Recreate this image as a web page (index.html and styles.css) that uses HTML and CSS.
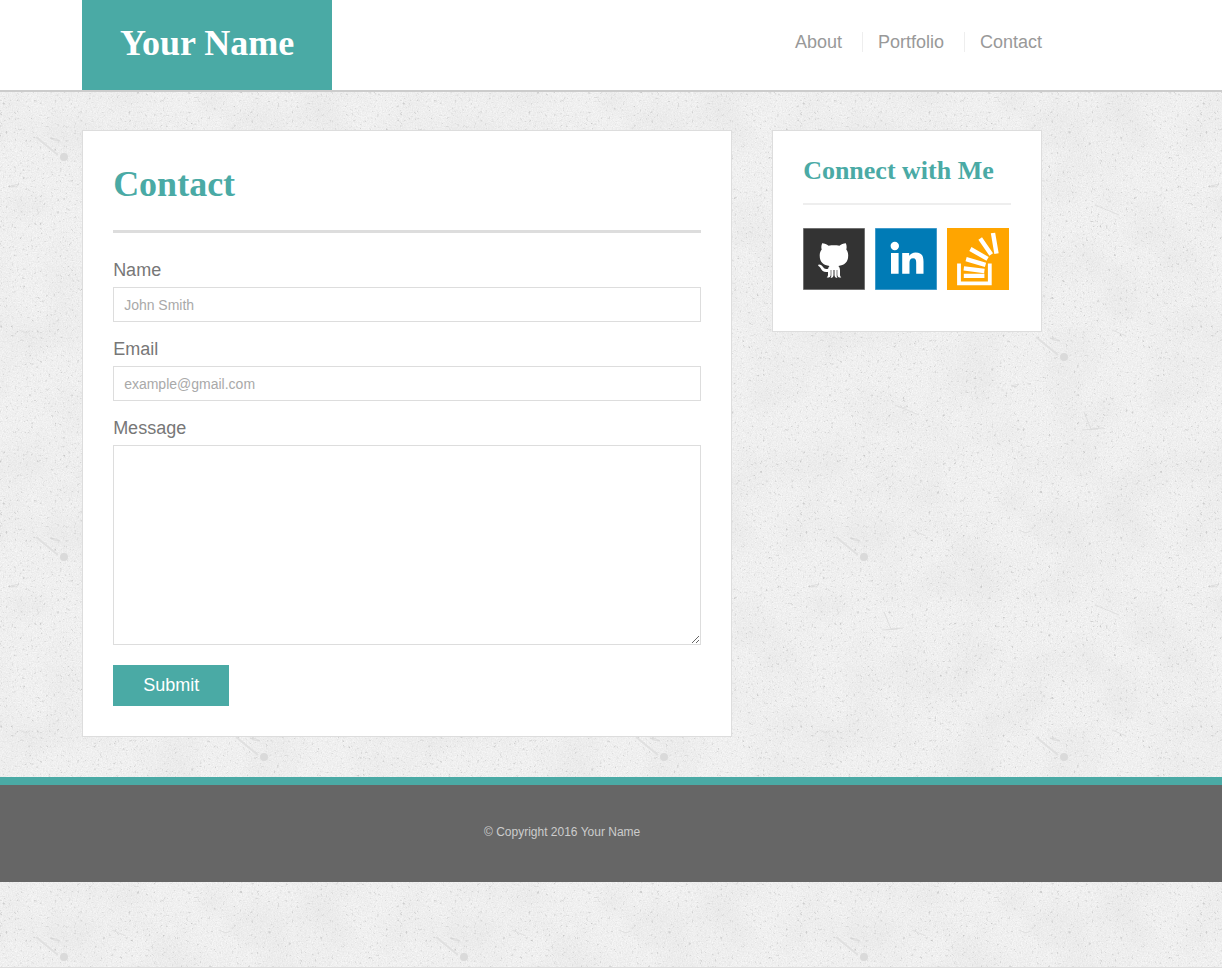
FILE: index.html
```html
<!DOCTYPE html>
<html lang="en">
<head>
  <meta charset="utf-8">
  <meta name="viewport" content="width=device-width, initial-scale=1">
  <title>Contact | Your Name</title>
  <link rel="stylesheet" href="styles.css">
</head>
<body>
  <header class="site-header">
    <div class="container header-row">
      <a class="logo" href="#">Your Name</a>
      <nav class="site-nav">
        <a href="#">About</a>
        <a href="#">Portfolio</a>
        <a href="#">Contact</a>
      </nav>
    </div>
  </header>

  <main class="site-main">
    <div class="container columns">
      <section class="card content">
        <h1 class="page-title">Contact</h1>
        <form class="contact-form">
          <div class="field">
            <label for="name">Name</label>
            <input id="name" type="text" placeholder="John Smith">
          </div>
          <div class="field">
            <label for="email">Email</label>
            <input id="email" type="email" placeholder="example@gmail.com">
          </div>
          <div class="field">
            <label for="message">Message</label>
            <textarea id="message"></textarea>
          </div>
          <button class="submit" type="submit">Submit</button>
        </form>
      </section>

      <aside class="card sidebar">
        <h2 class="side-title">Connect with Me</h2>
        <div class="social">
          <a href="#" aria-label="GitHub">
            <svg viewBox="0 0 62 62" width="62" height="62">
              <rect width="62" height="62" fill="#999"/>
              <rect x=".6" y=".6" width="60.8" height="60.8" fill="#333"/>
              <path fill="#fff" d="M19.200 15.200c2.400.2 4.500 1.200 6.400 2.500 3.600-.6 7.300-.6 10.800 0 1.900-1.300 4-2.300 6.400-2.500 1 2.100 1 4.300.5 6.300 1.300 1.600 1.900 3.600 1.900 6 0 6.900-4 9.800-9.800 10.400 1.100 1.200 1.600 2.400 1.600 4.200v4.700c0 1.300.4 1.900 1.300 2.600-2.200.4-4-.6-4-2.500v-4.800h-.6v5.300c0 1.200.3 1.900.8 2.700-1.800 0-3-1.100-3-3v-5h-1v5c0 1.900-1.200 3-3 3 .5-.8.8-1.500.8-2.700v-5.300h-.6v4.800c0 1.900-1.800 2.900-4 2.500.9-.7 1.300-1.300 1.300-2.600v-2.900c-4.200.6-6.100-.9-7.300-3.600-.5-1.100-1.200-1.800-2.200-2.300-.6-.4-.3-1.400.5-1.400 1.900 0 3.100 1.100 4 2.500 1.300 1.900 2.700 2.200 5.100 1.600.2-1.100.6-1.900 1.400-2.800-5.800-.6-9.800-3.500-9.800-10.400 0-2.400.7-4.400 2-6-.6-2-.5-4.200.5-6.300z"/>
            </svg>
          </a>
          <a href="#" aria-label="LinkedIn">
            <svg viewBox="0 0 62 62" width="62" height="62">
              <rect width="62" height="62" fill="#6bb0d8"/>
              <rect x=".6" y=".6" width="60.8" height="60.8" fill="#007bb6"/>
              <circle cx="19.800" cy="18" r="4.200" fill="#fff"/>
              <path fill="#fff" d="M16 25h7.600v20.700H16zM27.200 25h7v2.900c1.300-2.200 3.600-3.500 6.400-3.500 6 0 7.900 3.400 7.900 9.300v12h-7.300V34.800c0-2.800-.6-4.500-3.100-4.500-2.600 0-3.600 1.900-3.600 4.700v10.700h-7.300z"/>
            </svg>
          </a>
          <a href="#" aria-label="Stack Overflow">
            <svg viewBox="0 0 62 62" width="62" height="62">
              <rect width="62" height="62" fill="#ffa500"/>
              <g fill="none" stroke="#fff">
                <path stroke-width="3.800" d="M12 35.500v19.900h30.800V35.500"/>
                <path stroke-width="4.400" d="M16.800 47.900h20.600M16.800 40.400l20.600 2.600M19.100 31.200l19.400 5.600M23.400 21l17.200 9.900M33.200 10.600l11 15.900M46 5l3.500 20.600"/>
              </g>
            </svg>
          </a>
        </div>
      </aside>
    </div>
  </main>

  <footer class="site-footer">
    <p class="container copyright">© Copyright 2016 Your Name</p>
  </footer>
</body>
</html>
```

FILE: styles.css
```css
:root {
  --teal: #4aaaa5;
  --line: #ddd;
  --sans: Arial, "Liberation Sans", sans-serif;
  --serif: Georgia, "Liberation Serif", serif;
}

*,
*::before,
*::after {
  box-sizing: border-box;
}

/* Concrete texture: scratches and pits on two offset tiles, over fine grain */
body {
  margin: 0;
  min-height: 100vh;
  border-bottom: 1px solid var(--line);
  color: #777;
  font: 18px/24px var(--sans);
  background-color: #efefef;
  background-image:
    url("data:image/svg+xml,%3Csvg xmlns='http://www.w3.org/2000/svg' width='400' height='400'%3E%3Cg fill='none' stroke='%23d6d6d6'%3E%3Ccircle cx='64' cy='157' r='4' fill='%23dadada' stroke='none'/%3E%3Cpath d='M36 137l22 18' stroke='%23e0e0e0' stroke-width='2'/%3E%3Cpath d='M50 138l6 1 4 2-6-1zM11 186l8-2-3 3zM84 212l7 17 12-1M82 230l16-1' opacity='.7'/%3E%3Cpath d='M219 130l7 3 4-2M112 130l14 6M295 205l24 10' opacity='.6'/%3E%3C/g%3E%3C/svg%3E"),
    url("data:image/svg+xml,%3Csvg xmlns='http://www.w3.org/2000/svg' width='400' height='400'%3E%3Cg fill='none' stroke='%23d6d6d6'%3E%3Ccircle cx='64' cy='157' r='4' fill='%23dadada' stroke='none'/%3E%3Cpath d='M36 137l22 18' stroke='%23e0e0e0' stroke-width='2'/%3E%3Cpath d='M50 138l6 1 4 2-6-1zM11 186l8-2-3 3zM84 212l7 17 12-1M82 230l16-1' opacity='.7'/%3E%3Cpath d='M219 130l7 3 4-2M112 130l14 6M295 205l24 10' opacity='.6'/%3E%3C/g%3E%3C/svg%3E"),
    url("data:image/svg+xml,%3Csvg xmlns='http://www.w3.org/2000/svg' width='400' height='400'%3E%3Cfilter id='g' x='0' y='0' width='100%25' height='100%25' color-interpolation-filters='sRGB'%3E%3CfeTurbulence type='fractalNoise' baseFrequency='.8' numOctaves='3' seed='4' stitchTiles='stitch'/%3E%3CfeColorMatrix values='.1 0 0 0 .89 .1 0 0 0 .89 .1 0 0 0 .89 0 0 0 0 1'/%3E%3C/filter%3E%3Cfilter id='s' x='0' y='0' width='100%25' height='100%25' color-interpolation-filters='sRGB'%3E%3CfeTurbulence type='fractalNoise' baseFrequency='.35' numOctaves='3' seed='21' stitchTiles='stitch'/%3E%3CfeColorMatrix values='0 0 0 0 .78 0 0 0 0 .78 0 0 0 0 .78 4 0 0 0 -2.600'/%3E%3C/filter%3E%3Cfilter id='c' x='0' y='0' width='100%25' height='100%25' color-interpolation-filters='sRGB'%3E%3CfeTurbulence type='fractalNoise' baseFrequency='.02' numOctaves='5' seed='9' stitchTiles='stitch'/%3E%3CfeColorMatrix values='0 0 0 0 .8 0 0 0 0 .8 0 0 0 0 .8 .35 0 0 0 -.14'/%3E%3C/filter%3E%3Crect width='400' height='400' filter='url(%23g)'/%3E%3Crect width='400' height='400' filter='url(%23s)'/%3E%3Crect width='400' height='400' filter='url(%23c)'/%3E%3C/svg%3E");
  background-position: 0 0, 200px 200px, 0 0;
}

a {
  color: inherit;
  text-decoration: none;
}

.site-header,
.site-main,
.site-footer {
  padding-right: 8%;
}

.container {
  max-width: 960px;
  margin: 0 auto;
}

.site-header {
  background: #fff;
  border-bottom: 2px solid #ccc;
}

.header-row {
  display: flex;
  justify-content: space-between;
  align-items: flex-start;
  flex-wrap: wrap;
}

.logo {
  width: 250px;
  padding-bottom: 4px;
  background: var(--teal);
  color: #fff;
  font: bold 36px/86px var(--serif);
  text-align: center;
}

.site-nav {
  display: flex;
  gap: 20px;
  padding-top: 32px;
  color: #999;
  line-height: 20px;
}

.site-nav a + a {
  padding-left: 15px;
  border-left: 1px solid #eee;
}

.columns {
  display: flex;
  flex-wrap: wrap;
  align-items: flex-start;
  gap: 40px;
  padding: 38px 0 40px;
}

.card {
  padding: 30px;
  background: #fff;
  border: 1px solid var(--line);
}

.content {
  flex: 1 1 400px;
}

.sidebar {
  flex: 0 0 270px;
  padding-bottom: 41px;
}

.page-title,
.side-title {
  margin: 0;
  color: var(--teal);
  font-family: var(--serif);
}

.page-title {
  margin-bottom: 25px;
  padding-bottom: 23px;
  border-bottom: 3px solid var(--line);
  font-size: 36px;
  line-height: 46px;
}

.side-title {
  margin-bottom: 23px;
  padding-bottom: 22px;
  border-bottom: 2px solid #eee;
  font-size: 26px;
  line-height: 20px;
  white-space: nowrap;
}

.contact-form {
  display: grid;
  gap: 15px;
}

.field {
  display: grid;
  gap: 5px;
}

.field input,
.field textarea {
  display: block;
  width: 100%;
  height: 35px;
  margin: 0;
  padding: 0 10px;
  border: 1px solid var(--line);
  border-radius: 0;
  background: #fff;
  color: #777;
  font: 14px/20px var(--sans);
}

.field textarea {
  height: 200px;
  padding: 10px;
  resize: vertical;
}

.field ::placeholder {
  color: #a9a9a9;
}

.submit {
  justify-self: start;
  margin-top: 5px;
  padding: 10px 30px;
  border: 0;
  background: var(--teal);
  color: #fff;
  font: 18px/21px var(--sans);
}

.social {
  display: flex;
  gap: 10px;
}

.social svg {
  display: block;
}

.site-footer {
  border-top: 8px solid var(--teal);
  background: #666;
}

.copyright {
  padding: 35px 0 38px;
  color: #ccc;
  font-size: 12px;
  text-align: center;
}
```
